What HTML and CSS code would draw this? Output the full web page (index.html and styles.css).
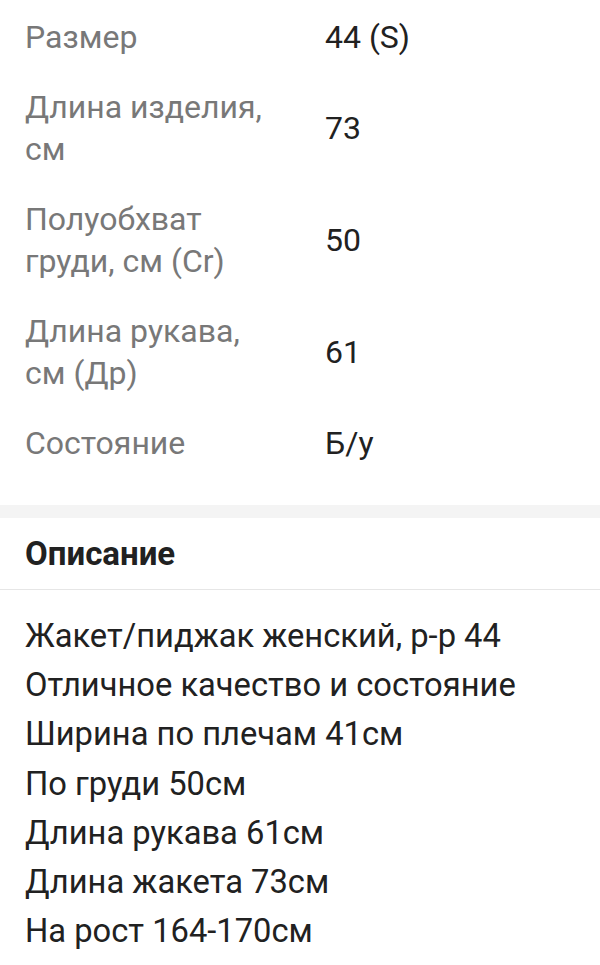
FILE: index.html
```html
<!DOCTYPE html>
<html lang="ru">
<head>
<meta charset="utf-8">
<link rel="stylesheet" href="styles.css">
</head>
<body>
<section class="params">
  <div class="row"><div class="label">Размер</div><div class="value">44 (S)</div></div>
  <div class="row"><div class="label">Длина изделия, см</div><div class="value">73</div></div>
  <div class="row"><div class="label">Полуобхват груди, см (Cr)</div><div class="value">50</div></div>
  <div class="row"><div class="label">Длина рукава, см (Др)</div><div class="value">61</div></div>
  <div class="row"><div class="label">Состояние</div><div class="value">Б/у</div></div>
</section>
<div class="band"></div>
<section class="desc">
  <h2 class="desc-title">Описание</h2>
  <div class="desc-body">
    <p>Жакет/пиджак женский, р-р 44</p>
    <p>Отличное качество и состояние</p>
    <p>Ширина по плечам 41см</p>
    <p>По груди 50см</p>
    <p>Длина рукава 61см</p>
    <p>Длина жакета 73см</p>
    <p>На рост 164-170см</p>
  </div>
</section>
</body>
</html>
```
FILE: styles.css
```css
html, body {
  margin: 0;
  padding: 0;
  background: #ffffff;
}
body {
  font-family: Roboto, "Noto Sans", sans-serif;
  font-size: 32px;
  color: #212121;
  width: 600px;
  overflow: hidden;
}
.params {
  padding: 2px 0 27px;
}
.row {
  display: grid;
  grid-template-columns: 255px 1fr;
  column-gap: 45px;
  align-items: center;
  padding: 14px 25px;
  line-height: 42px;
}
.label {
  color: #787878;
}
.value {
  color: #212121;
}
.band {
  height: 13px;
  background: #f4f4f4;
}
.desc-title {
  margin: 0;
  font-size: 33px;
  font-weight: 700;
  line-height: 32px;
  padding: 20px 25px 19px;
  border-bottom: 1px solid #e6e6e6;
  color: #212121;
}
.desc-body {
  padding: 22px 25px 0;
  font-size: 32.7px;
}
.desc-body p {
  margin: 0;
  line-height: 49.2px;
}
```
